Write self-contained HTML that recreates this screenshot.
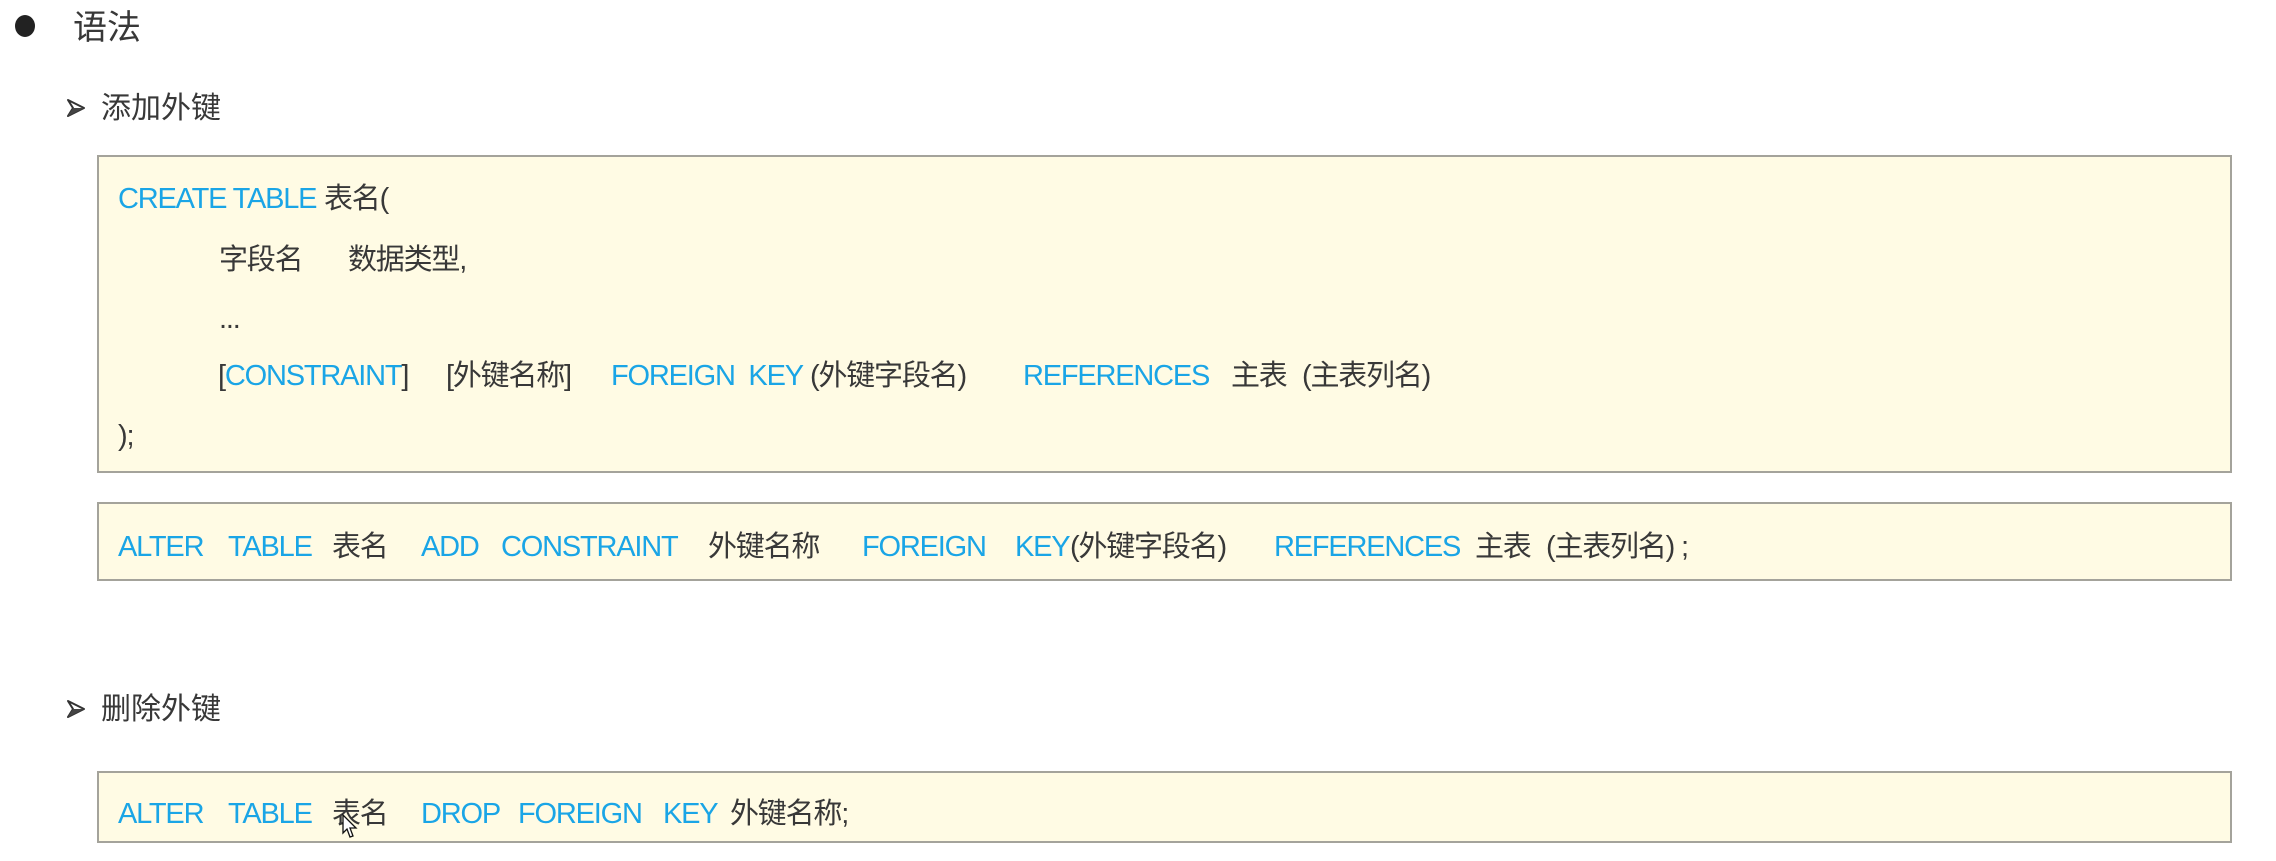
<!DOCTYPE html>
<html><head><meta charset="utf-8"><style>
body{margin:0;width:2276px;height:861px;background:#fff;position:relative;overflow:hidden;font-family:"Liberation Sans","Noto Sans CJK SC",sans-serif;color:#383838}
.t{position:absolute;white-space:nowrap;font-size:29px;line-height:36px;letter-spacing:-1.2px;transform:translateY(calc(-50% + 3px))}
.b{color:#1aa5e6}
.box{position:absolute;left:97px;width:2135px;background:#fffbe4;border:2px solid #a4a39b;box-sizing:border-box}
</style></head><body>
<div style="position:absolute;left:15px;top:15px;width:20px;height:22px;border-radius:50%;background:#222"></div>
<div class="t" style="left:73px;top:25px;font-size:34px;letter-spacing:0">语法</div>

<svg style="position:absolute;left:65px;top:97px" width="22" height="22" viewBox="0 0 22 22"><path d="M3 3 L19 11 L3 19 L8 11 Z" fill="#fff" stroke="#333" stroke-width="2" stroke-linejoin="round"/><path d="M3 19 L8 11 L19 11 Z" fill="#444"/></svg>
<div class="t" style="left:101px;top:106px;font-size:30px;letter-spacing:0">添加外键</div>

<div class="box" style="top:155px;height:318px"></div>
<div class="t b" style="left:118px;top:196px">CREATE TABLE</div><div class="t" style="left:324px;top:196px">表名(</div>
<div class="t" style="left:219px;top:257px">字段名</div><div class="t" style="left:348px;top:257px">数据类型,</div>
<div class="t" style="left:219px;top:316px">...</div>
<div class="t" style="left:218px;top:373px">[<span class="b">CONSTRAINT</span>]</div>
<div class="t" style="left:446px;top:373px">[外键名称]</div>
<div class="t b" style="left:611px;top:373px">FOREIGN&nbsp; KEY</div>
<div class="t" style="left:810px;top:373px">(外键字段名)</div>
<div class="t b" style="left:1023px;top:373px">REFERENCES</div>
<div class="t" style="left:1231px;top:373px">主表</div>
<div class="t" style="left:1302px;top:373px">(主表列名)</div>
<div class="t" style="left:118px;top:433px">);</div>

<div class="box" style="top:502px;height:79px"></div>
<div class="t b" style="left:118px;top:544px">ALTER</div>
<div class="t b" style="left:228px;top:544px">TABLE</div>
<div class="t" style="left:332px;top:544px">表名</div>
<div class="t b" style="left:421px;top:544px">ADD</div>
<div class="t b" style="left:501px;top:544px">CONSTRAINT</div>
<div class="t" style="left:708px;top:544px">外键名称</div>
<div class="t b" style="left:862px;top:544px">FOREIGN</div>
<div class="t b" style="left:1015px;top:544px">KEY</div>
<div class="t" style="left:1070px;top:544px">(外键字段名)</div>
<div class="t b" style="left:1274px;top:544px">REFERENCES</div>
<div class="t" style="left:1475px;top:544px">主表</div>
<div class="t" style="left:1546px;top:544px">(主表列名) ;</div>

<svg style="position:absolute;left:65px;top:698px" width="22" height="22" viewBox="0 0 22 22"><path d="M3 3 L19 11 L3 19 L8 11 Z" fill="#fff" stroke="#333" stroke-width="2" stroke-linejoin="round"/><path d="M3 19 L8 11 L19 11 Z" fill="#444"/></svg>
<div class="t" style="left:101px;top:707px;font-size:30px;letter-spacing:0">删除外键</div>

<div class="box" style="top:771px;height:72px"></div>
<div class="t b" style="left:118px;top:811px">ALTER</div>
<div class="t b" style="left:228px;top:811px">TABLE</div>
<div class="t" style="left:332px;top:811px">表名</div>
<div class="t b" style="left:421px;top:811px">DROP</div>
<div class="t b" style="left:518px;top:811px">FOREIGN</div>
<div class="t b" style="left:663px;top:811px">KEY</div>
<div class="t" style="left:730px;top:811px">外键名称;</div>
<svg style="position:absolute;left:342px;top:814px" width="16" height="26" viewBox="0 0 16 26"><path d="M1 1 L1 19 L5 15 L8 23 L11 22 L8 14 L14 14 Z" fill="#fff" stroke="#111" stroke-width="1.3"/></svg>
</body></html>
